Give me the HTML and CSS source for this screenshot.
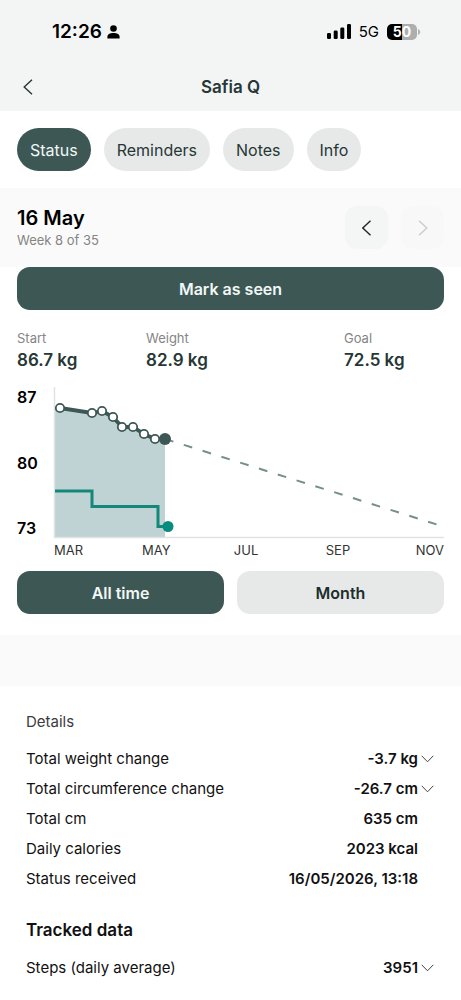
FILE: index.html
```html
<!DOCTYPE html>
<html lang="en">
<head>
<meta charset="utf-8">
<meta name="viewport" content="width=device-width, initial-scale=1">
<title>Safia Q</title>
<link rel="stylesheet" href="styles.css">
</head>
<body>
<header class="top">
  <div class="statusbar">
    <div class="clock">
      <span>12:26</span>
      <svg width="13" height="14" viewBox="0 0 13 14" aria-hidden="true"><circle cx="6.5" cy="3.5" r="3.3"/><path d="M.4 13.6V12c0-2.600 2.400-4 6.100-4s6.100 1.400 6.100 4v1.600z"/></svg>
    </div>
    <div class="signals">
      <svg width="24" height="15" viewBox="0 0 24 15" aria-hidden="true"><rect x="0" y="9" width="4" height="6" rx="1.300"/><rect x="6.700" y="6.500" width="4" height="8.500" rx="1.300"/><rect x="13.300" y="3.500" width="4" height="11.500" rx="1.300"/><rect x="20" y="0" width="4" height="15" rx="1.300"/></svg>
      <span class="network">5G</span>
      <div class="battery"><span class="battery-level">50</span><svg width="3" height="6" viewBox="0 0 3 6" aria-hidden="true"><path d="M0 0c3 .8 3 5.200 0 6z" fill="#b4b6b6"/></svg></div>
    </div>
  </div>
  <nav class="navbar">
    <button class="back" aria-label="Back"><svg width="10" height="16" viewBox="0 0 10 16"><path class="line" d="M9 .7 1.200 8 9 15.300"/></svg></button>
    <h1 class="title">Safia Q</h1>
  </nav>
</header>
<main>
  <div class="tabs">
    <button class="tab active">Status</button>
    <button class="tab">Reminders</button>
    <button class="tab">Notes</button>
    <button class="tab">Info</button>
  </div>
  <section class="date">
    <div>
      <h2 class="day">16 May</h2>
      <p class="week">Week 8 of 35</p>
    </div>
    <div class="pager">
      <button class="page" aria-label="Previous"><svg width="10" height="16" viewBox="0 0 10 16"><path class="line" d="M8.500 .7 .8 8 8.500 15.300"/></svg></button>
      <button class="page" aria-label="Next" disabled><svg width="10" height="16" viewBox="0 0 10 16"><path class="line" d="M1 .7 8.800 8 1 15.300"/></svg></button>
    </div>
  </section>
  <section class="progress">
    <button class="action active">Mark as seen</button>
    <dl class="stats">
      <div><dt>Start</dt><dd>86.7 kg</dd></div>
      <div><dt>Weight</dt><dd>82.9 kg</dd></div>
      <div><dt>Goal</dt><dd>72.5 kg</dd></div>
    </dl>
    <div class="chart">
      <div class="scale"><span>87</span><span>80</span><span>73</span></div>
      <svg class="plot" viewBox="0 0 390 151" role="img" aria-label="Weight over time">
        <path d="M1 21H6L38 26 48 24 59 30 68 40H79L90 47 101 52H111V151H1z" fill="#bfd3d5"/>
        <path d="M.5 0V151M0 150.500H390" fill="none" stroke="#dfe4e3" stroke-width="1.500"/>
        <path d="M111 52 383 137.500" fill="none" stroke="#768f8b" stroke-width="2" stroke-dasharray="8.800 10.900"/>
        <path d="M1 104H38V119.500H104V139.500H114" fill="none" stroke="#15877a" stroke-width="3"/>
        <circle cx="114" cy="139.500" r="5.500" fill="#078d7e"/>
        <path d="M6 21 38 26 48 24 59 30 68 40H79L90 47 101 52H111" fill="none" stroke="#3d5755" stroke-width="3.800"/>
        <g fill="#fff" stroke="#3d5755" stroke-width="1.800"><circle cx="6" cy="21" r="4.200"/><circle cx="38" cy="26" r="4.200"/><circle cx="48" cy="24" r="4.200"/><circle cx="59" cy="30" r="4.200"/><circle cx="68" cy="40" r="4.200"/><circle cx="79" cy="40" r="4.200"/><circle cx="90" cy="47" r="4.200"/><circle cx="101" cy="52" r="4.200"/></g>
        <circle cx="111" cy="52" r="6" fill="#3d5755"/>
      </svg>
      <div class="months"><span>MAR</span><span>MAY</span><span>JUL</span><span>SEP</span><span>NOV</span></div>
    </div>
    <div class="ranges">
      <button class="action active">All time</button>
      <button class="action">Month</button>
    </div>
  </section>
  <section class="details">
    <h2 class="caption">Details</h2>
    <dl class="rows">
      <div class="row"><dt>Total weight change</dt><dd><button class="expand">-3.7 kg<svg width="13" height="8" viewBox="0 0 13 8" aria-hidden="true"><path class="thin" d="M.7.8 6.500 6.800 12.300.8"/></svg></button></dd></div>
      <div class="row"><dt>Total circumference change</dt><dd><button class="expand">-26.7 cm<svg width="13" height="8" viewBox="0 0 13 8" aria-hidden="true"><path class="thin" d="M.7.8 6.500 6.800 12.300.8"/></svg></button></dd></div>
      <div class="row"><dt>Total cm</dt><dd class="plain">635 cm</dd></div>
      <div class="row"><dt>Daily calories</dt><dd class="plain">2023 kcal</dd></div>
      <div class="row"><dt>Status received</dt><dd class="plain">16/05/2026, 13:18</dd></div>
    </dl>
    <h2 class="heading">Tracked data</h2>
    <dl class="rows">
      <div class="row"><dt>Steps (daily average)</dt><dd><button class="expand">3951<svg width="13" height="8" viewBox="0 0 13 8" aria-hidden="true"><path class="thin" d="M.7.8 6.500 6.800 12.300.8"/></svg></button></dd></div>
    </dl>
  </section>
</main>
</body>
</html>
```
FILE: styles.css
```css
* { box-sizing: border-box; }
body { margin: 0; background: #fafafa; color: #111; font-family: Inter, "Liberation Sans", sans-serif; font-size: 15px; line-height: 20px; }
h1, h2, p, dl, dd { margin: 0; }
button { border: 0; padding: 0; background: none; color: inherit; font: inherit; }
svg { display: block; }
.line { fill: none; stroke: currentColor; stroke-width: 1.4; }
.thin { fill: none; stroke: #444; stroke-width: 1; }

.top { background: #f3f5f5; }
.statusbar { display: flex; justify-content: space-between; align-items: center; height: 63px; padding: 0 40px 0 52px; color: #000; }
.clock { display: flex; align-items: center; gap: 5px; font-size: 19px; font-weight: 600; }
.signals { display: flex; align-items: center; gap: 8px; }
.network { font-size: 15px; }
.battery { display: flex; align-items: center; gap: 1px; }
.battery-level { width: 30px; border-radius: 5px; background: linear-gradient(90deg, #000 50%, #adafaf 50%); color: #fff; font-size: 14px; font-weight: 700; line-height: 16px; text-align: center; }
.navbar { display: grid; grid-template-columns: 40px 1fr 40px; align-items: center; height: 48px; padding: 0 17px; color: #263735; }
.back { display: flex; align-items: center; height: 40px; padding-left: 6px; }
.title { font-size: 17px; font-weight: 600; text-align: center; }

.tabs { display: flex; gap: 13px; padding: 17px; background: #fff; }
.tab { height: 43px; padding: 0 13px; border-radius: 22px; background: #e7e9e8; color: #263735; font-size: 16px; }
.active.tab, .active.action { background: #3d5755; color: #f1f7f6; }

.date { display: flex; justify-content: space-between; align-items: center; height: 79px; padding: 0 17px; }
.day { color: #000; font-size: 20px; font-weight: 600; line-height: 24px; }
.week { color: #858585; font-size: 13px; }
.pager { display: flex; gap: 13px; }
.page { display: grid; place-items: center; width: 43px; height: 43px; border-radius: 12px; background: #f4f6f5; color: #222; }
.page:disabled { background: #f8f8f8; color: #ccc; }

.progress { display: flex; flex-direction: column; padding: 0 17px 21px; background: #fff; }
.action { height: 43px; border-radius: 13px; background: #e7e9e8; color: #1d2e2c; font-size: 16px; font-weight: 600; }
.stats { display: grid; grid-template-columns: 129fr 198fr 100fr; padding: 18px 0 15px; }
.stats dt { color: #858585; font-size: 13px; }
.stats dd { color: #263735; font-size: 17px; font-weight: 600; line-height: 24px; }

.chart { display: grid; grid-template-columns: 37px 1fr; row-gap: 2px; }
.scale { display: flex; flex-direction: column; justify-content: space-between; color: #000; font-size: 16px; font-weight: 600; }
.plot { width: 100%; height: auto; overflow: visible; }
.months { grid-column: 2; display: grid; grid-template-columns: 88fr 92fr 92fr 90fr 28fr; color: #333; font-size: 13px; }
.ranges { display: grid; grid-template-columns: 1fr 1fr; gap: 13px; padding-top: 11px; }

.details { margin-top: 51px; padding: 25px 27px 20px 26px; background: #fff; }
.caption { color: #3c3c3c; font-size: 15px; font-weight: 400; line-height: 22px; }
.rows { padding-top: 11px; }
.row { display: flex; justify-content: space-between; align-items: center; height: 30px; }
.row dd { font-weight: 600; }
.expand { display: flex; align-items: center; gap: 3px; }
.plain { padding-right: 16px; }
.heading { padding-top: 24px; font-size: 17px; font-weight: 600; line-height: 24px; }
```
